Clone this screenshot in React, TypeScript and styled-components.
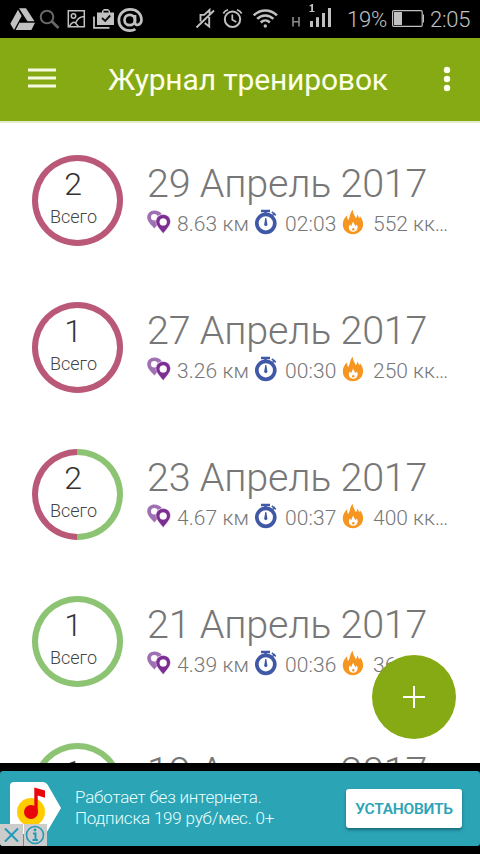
import React from "react";
import styled, { createGlobalStyle } from "styled-components";

const GlobalStyle = createGlobalStyle`
  * { box-sizing: border-box; }
  html, body { margin: 0; padding: 0; background: #000; }
  body { font-family: Roboto, "Noto Sans", sans-serif; overflow: hidden; }
  svg { display: block; flex: none; }
`;

const Screen = styled.div`
  width: 480px;
  height: 854px;
  display: flex;
  flex-direction: column;
  background: #000;
  overflow: hidden;
`;

const StatusBar = styled.div`
  height: 38px;
  flex: none;
  display: flex;
  align-items: center;
  color: #c1c1c1;
`;

const StatusIcon = styled.svg<{ $gap: number }>`
  height: 38px;
  margin-left: ${(p) => p.$gap}px;
`;

const StatusText = styled.span<{ $gap: number; $width: number }>`
  margin-left: ${(p) => p.$gap}px;
  width: ${(p) => p.$width}px;
  padding-top: 1px;
  font-size: 22px;
  line-height: 38px;
  font-weight: 300;
  letter-spacing: -0.25px;
  white-space: nowrap;
`;

const Toolbar = styled.header`
  height: 85px;
  flex: none;
  display: flex;
  align-items: center;
  padding: 0 0 0 28px;
  background: #86aa14;
  border-bottom: 2px solid #e5eacb;
  color: #fff;
`;

const MenuIcon = styled.svg`
  margin-bottom: 3px;
`;

const MoreIcon = styled.svg`
  margin-bottom: 2px;
`;

const Title = styled.h1`
  margin: 0 0 0 52px;
  width: 335px;
  font-size: 30px;
  line-height: 40px;
  font-weight: 400;
  letter-spacing: -0.15px;
  white-space: nowrap;
  color: #fdffe9;
`;

const Content = styled.main`
  position: relative;
  height: 640px;
  flex: none;
  background: #fff;
  overflow: hidden;
`;

const List = styled.ul`
  list-style: none;
  margin: 0;
  padding: 4px 0 0;
`;

const Row = styled.li`
  height: 147px;
  display: flex;
  padding: 28px 0 0 32px;
`;

const Ring = styled.div<{ $left: string; $right: string }>`
  width: 91px;
  height: 91px;
  flex: none;
  padding: 6px;
  border-radius: 50%;
  background: linear-gradient(to right, ${(p) => p.$left} 50%, ${(p) => p.$right} 50%);
`;

const RingInner = styled.div`
  height: 79px;
  display: flex;
  flex-direction: column;
  align-items: center;
  padding: 4px 8px 0 0;
  border-radius: 50%;
  background: #fff;
  color: #333;
`;

const Count = styled.span`
  margin-right: 1px;
  font-size: 32px;
  line-height: 38px;
  font-weight: 300;
`;

const Total = styled.span`
  font-size: 18px;
  line-height: 22px;
  margin-top: 3px;
  font-weight: 300;
  color: #444;
`;

const Details = styled.div`
  margin-left: 24px;
  width: 310px;
`;

const DateText = styled.div`
  margin-top: 5px;
  font-size: 39.500px;
  line-height: 48px;
  font-weight: 300;
  letter-spacing: -0.22px;
  color: #777;
  white-space: nowrap;
`;

const Stats = styled.div`
  display: flex;
  align-items: center;
  margin-top: 1px;
  height: 30px;
  font-size: 21px;
  line-height: 30px;
  font-weight: 300;
  color: #777;
  white-space: nowrap;

  svg {
    margin-bottom: 5px;
  }
`;

const Stat = styled.span<{ $width: number; $gap: number; $spacing?: number }>`
  width: ${(p) => p.$width}px;
  padding-left: ${(p) => p.$gap}px;
  letter-spacing: ${(p) => p.$spacing ?? 0}px;
`;

const Fab = styled.button`
  position: absolute;
  right: 24px;
  bottom: 24px;
  width: 84px;
  height: 84px;
  padding: 0;
  border: 0;
  border-radius: 50%;
  background: #86aa14;
  display: grid;
  place-items: center;
`;

const Ad = styled.aside`
  position: relative;
  margin-top: 8px;
  height: 75px;
  flex: none;
  display: flex;
  border-radius: 3px;
  overflow: hidden;
  background: #2ba4b6;
`;

const AdText = styled.p`
  margin: 16px 0 0 14px;
  width: 271px;
  font-size: 17px;
  line-height: 21px;
  font-weight: 300;
  letter-spacing: -0.2px;
  color: #e9ffff;
  white-space: nowrap;
`;

const Install = styled.button`
  margin-top: 18px;
  width: 116px;
  height: 39px;
  padding: 0;
  border: 0;
  border-radius: 3px;
  background: #fff;
  box-shadow: 0 2px 3px rgba(0, 50, 60, 0.5);
  color: #2ba4b6;
  font-family: Roboto, sans-serif;
  font-size: 15.500px;
  letter-spacing: -0.25px;
  font-weight: 600;
  white-space: nowrap;
`;

const AdChoices = styled.div`
  position: absolute;
  left: 0;
  bottom: 0;
  display: flex;
  gap: 1px;
`;

const PINK = "#ba5878";
const GREEN = "#8dc474";

const entries = [
  { count: 2, date: "29 Апрель 2017", km: "8.63 км", time: "02:03", kcal: "552 кк…", left: PINK, right: PINK },
  { count: 1, date: "27 Апрель 2017", km: "3.26 км", time: "00:30", kcal: "250 кк…", left: PINK, right: PINK },
  { count: 2, date: "23 Апрель 2017", km: "4.67 км", time: "00:37", kcal: "400 кк…", left: PINK, right: GREEN },
  { count: 1, date: "21 Апрель 2017", km: "4.39 км", time: "00:36", kcal: "36", left: GREEN, right: GREEN },
  { count: 1, date: "19 Апрель 2017", left: GREEN, right: GREEN },
];

const PinsIcon = () => (
  <svg width="24" height="24" viewBox="0 0 24 24">
    <path fill="#a070b5" fillRule="evenodd" d="M7.300 .5C3.200 .5 .2 3.500 .2 7.300c0 4.200 4 7.500 7.100 11.200l3-3.500V6l4.600-1.800C13.300 1.800 10.600 .5 7.300 .5zM7.300 4a3.300 3.300 0 1 1 0 6.600 3.300 3.300 0 0 1 0-6.600z" />
    <path fill="#7c2e93" stroke="#fff" strokeWidth=".4" fillRule="evenodd" d="M16.200 4.500c-4.200 0-7.200 3.100-7.200 7 0 4.400 4.100 7.800 7.200 11.900 3.100-4.100 7.200-7.500 7.200-11.900 0-3.900-3-7-7.200-7zm0 4a3.500 3.500 0 1 1 0 7 3.500 3.500 0 0 1 0-7z" />
  </svg>
);

const StopwatchIcon = () => (
  <svg width="24" height="26" viewBox="0 0 24 26">
    <g fill="none" stroke="#4059a7">
      <circle cx="11.800" cy="14.300" r="9" strokeWidth="3.700" />
      <path d="M7 2h9M11.500 2v4" strokeWidth="2.400" />
      <path d="M17.800 2.900l4 3.500M20.800 3.900l-2.600 3" strokeWidth="1.500" />
    </g>
    <path fill="#4059a7" d="M11.300 9h1l1 5.700a1.700 1.700 0 1 1-3 0z" />
  </svg>
);

const FlameIcon = () => (
  <svg width="22" height="26" viewBox="0 0 22 26">
    <path fill="#f69620" d="M10.800.7c-.2 3.600 1.700 5 3 8.500 1-.8 1.300-1.900 1.400-3.500 1.100.8 1.500 1.900 1.800 3.500.6-.4.900-.9 1.100-1.600 2 2.300 3 5 3 7.700 0 5.700-4.500 9.900-10.200 9.900S.8 21 .8 15.300c0-3.600 1.500-6.600 4.400-9.100-.2 2.300.2 3.800 1.100 4.700C8.400 7.900 7.500 4 10.800.7z" />
    <path fill="#fff" d="M11.200 12.800c.8 1.300.8 2.500 2.300 4.200.7-.3 1-.8 1.100-1.500 1 1.200 1.300 2.200 1 3.500a4.400 4.400 0 0 1-8.700-.1c-.1-1.500.4-2.700 1.400-3.600.1 1 .4 1.500 1 1.700.8-1.300.7-2.700 1.900-4.200z" />
    <path fill="#f69620" d="M11.600 18.700c1.300 1.300 1.600 2.700-.3 2.800-2-.1-1.400-1.600-.6-2.200z" />
  </svg>
);

const StatusIcons = () => (
  <>
    <StatusIcon $gap={10} width="25" viewBox="10 0 25 38" fill="#c1c1c1">
      <path d="M19 8.300h7l8.500 13h-7zM18 9.800l3.600 6.300-7.600 14-3.700-6.400zM19.400 22.700H35l-3.600 7.400H15.600z" />
    </StatusIcon>
    <StatusIcon $gap={4} width="21" viewBox="39 0 21 38" fill="none" stroke="#686868">
      <circle cx="47" cy="17" r="6.300" strokeWidth="2" />
      <path d="M51.700 21.300l6.800 6.700" strokeWidth="2.700" />
    </StatusIcon>
    <StatusIcon $gap={7} width="19" viewBox="67 0 19 38" fill="none" stroke="#c1c1c1" strokeWidth="1.500">
      <path d="M68.300 10.800h16v16h-16zM69.500 26.500c2-5 5-4.500 6.300-3.500 1-3 3.500-6 8-6.500M75.500 23l3 3.500" />
      <circle cx="73.500" cy="16" r="2.200" />
    </StatusIcon>
    <StatusIcon $gap={7} width="22" viewBox="93 0 22 38">
      <path d="M94 16.500v11.300h15.500" fill="none" stroke="#c1c1c1" strokeWidth="1.800" />
      <path fill="#c1c1c1" fillRule="evenodd" d="M97 12.500h5V11l2-2h4l2 2v1.500h4V25H97zm6.500 0h5v-1.700h-5z" />
      <path d="M102 18l3.200 3 5-5.500" fill="none" stroke="#111" strokeWidth="1.900" />
    </StatusIcon>
    <StatusIcon $gap={2} width="27" viewBox="117 0 27 38" fill="none" stroke="#c1c1c1" strokeWidth="2.700">
      <circle cx="129.700" cy="20" r="5.200" />
      <path d="M135 15v7.500c0 4 6.500 3 6.500-2.700 0-6.500-5-10.400-11.400-10.400-6.500 0-11.200 4.700-11.200 10.800 0 6.300 4.800 10.500 11 10.500 2 0 4-.5 5.500-1.500" />
    </StatusIcon>
    <StatusIcon $gap={51} width="20" viewBox="195 0 20 38" fill="none" stroke="#c1c1c1" strokeWidth="1.900">
      <path d="M200.500 21.500v-6.600h3.700l5.300-4.900v3.500M196.500 27.500l17.500-17M209.200 17v9.500l-4.500-3.500" />
    </StatusIcon>
    <StatusIcon $gap={7} width="22" viewBox="222 0 22 38" fill="none" stroke="#c1c1c1" strokeWidth="2">
      <circle cx="232.500" cy="19.300" r="7.700" />
      <path d="M223.300 13.500c1-1.800 2.600-3 4.700-3.700M237 9.800c2 .7 3.600 2 4.700 3.700M232.300 14.500v5.300l4 2.300" strokeWidth="1.700" />
    </StatusIcon>
    <StatusIcon $gap={8} width="27" viewBox="252 0 27 38" fill="none" stroke="#c1c1c1" strokeWidth="2.500">
      <path d="M253.700 15.400c6.600-6.700 16.700-6.700 23.200 0M257.200 18.900c4.700-4.700 11.500-4.700 16.200 0M260.800 22.500c2.600-2.600 6.400-2.600 9 0" />
      <circle cx="265.300" cy="26" r="1.700" fill="#c1c1c1" stroke="none" />
    </StatusIcon>
    <StatusIcon $gap={12} width="10" viewBox="291 0 10 38" fill="none" stroke="#8b8b8b" strokeWidth="1.600">
      <path d="M293 17v9.500M299 17v9.500M293 21.700h6" />
    </StatusIcon>
    <StatusIcon $gap={7} width="24" viewBox="308 0 24 38" fill="#c1c1c1">
      <path d="M309.500 5.500l2.500-1.500h1v7h1.500v1h-5v-1h1.700V6.200h-1.700zM310 21h3v6h-3zM316 17.300h3V27h-3zM322 13h3v14h-3zM328 8h3v19h-3z" />
    </StatusIcon>
  </>
);

export default function App() {
  return (
    <Screen>
      <GlobalStyle />
      <StatusBar>
        <StatusIcons />
        <StatusText $gap={15} $width={45}>19%</StatusText>
        <StatusIcon $gap={0} width="32" viewBox="392 0 32 38">
          <rect x="392.600" y="10.600" width="29.600" height="15.800" rx="1.200" fill="none" stroke="#c1c1c1" strokeWidth="1.200" />
          <path fill="#c1c1c1" d="M394 12h8v13h-8zM423 14.500h1v8h-1z" />
        </StatusIcon>
        <StatusText $gap={6} $width={44}>2:05</StatusText>
      </StatusBar>
      <Toolbar>
        <MenuIcon width="28" height="22" viewBox="0 0 28 22" stroke="#f5f9df" strokeWidth="3">
          <path d="M0 3h28M0 11h28M0 19h28" />
        </MenuIcon>
        <Title>Журнал тренировок</Title>
        <MoreIcon width="8" height="26" viewBox="0 0 8 26" fill="#fdffef">
          <circle cx="4" cy="4" r="3.200" />
          <circle cx="4" cy="13" r="3.200" />
          <circle cx="4" cy="22" r="3.200" />
        </MoreIcon>
      </Toolbar>
      <Content>
        <List>
          {entries.map((e) => (
            <Row key={e.date}>
              <Ring $left={e.left} $right={e.right}>
                <RingInner>
                  <Count>{e.count}</Count>
                  {e.km && <Total>Всего</Total>}
                </RingInner>
              </Ring>
              <Details>
                <DateText>{e.date}</DateText>
                {e.km && (
                  <Stats>
                    <PinsIcon />
                    <Stat $width={83} $gap={6} $spacing={0.1}>{e.km}</Stat>
                    <StopwatchIcon />
                    <Stat $width={64} $gap={7} $spacing={0.1}>{e.time}</Stat>
                    <FlameIcon />
                    <Stat $width={90} $gap={9}>{e.kcal}</Stat>
                  </Stats>
                )}
              </Details>
            </Row>
          ))}
        </List>
        <Fab aria-label="Добавить">
          <svg width="22" height="22" viewBox="0 0 22 22" stroke="#fff" strokeWidth="2">
            <path d="M0 11h22M11 0v22" />
          </svg>
        </Fab>
      </Content>
      <Ad>
        <svg width="61" height="75" viewBox="0 0 61 75">
          <path fill="#fff" d="M14 11h29q3 0 4.500 2.500L61 37 47.500 60q-1.500 3-4.500 3H14q-4 0-4-4V15q0-4 4-4z" />
          <circle cx="31" cy="41" r="14" fill="#fc0" />
          <circle cx="31" cy="41" r="7" fill="#e8060c" />
          <path fill="#e8060c" d="M34.300 16.500l10.700 3v7.300l-7.300-2.300V41h-3.400z" />
        </svg>
        <AdText>
          Работает без интернета.
          <br />
          Подписка 199 руб/мес. 0+
        </AdText>
        <Install>УСТАНОВИТЬ</Install>
        <AdChoices>
          <svg width="23" height="22" viewBox="0 0 23 22">
            <path fill="#ccc" d="M0 0h23v22H0z" />
            <path d="M5 4.500l13 13M18 4.500l-13 13" stroke="#2299b5" strokeWidth="2" />
          </svg>
          <svg width="23" height="22" viewBox="0 0 23 22">
            <path fill="#ccc" d="M0 0h23v22H0z" />
            <circle cx="11" cy="11" r="8.500" fill="none" stroke="#2299b5" strokeWidth="1.600" />
            <path d="M9 9.500h2.500V16M8.500 16H14" fill="none" stroke="#2299b5" strokeWidth="2" />
            <circle cx="11" cy="6" r="1.400" fill="#2299b5" />
          </svg>
        </AdChoices>
      </Ad>
    </Screen>
  );
}
